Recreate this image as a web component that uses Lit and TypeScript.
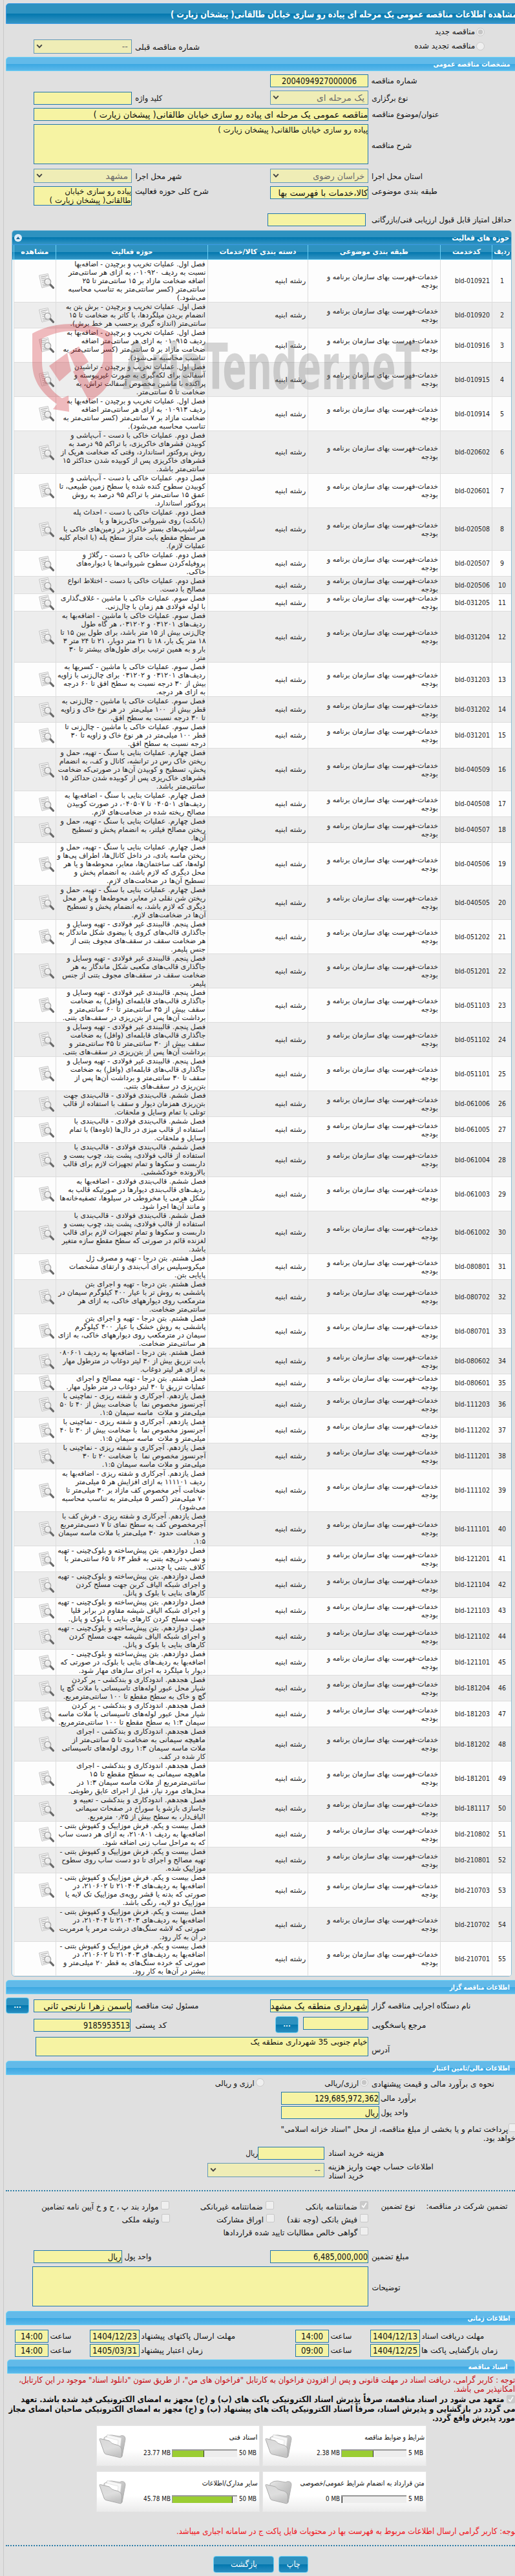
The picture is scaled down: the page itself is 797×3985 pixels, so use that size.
import { LitElement, html, css, svg, nothing } from "lit";
import { customElement, property } from "lit/decorators.js";

type Line = [string, number];
type Row = [string, ...Line[]];

/* One line of text squeezed or stretched horizontally to a set width. */
@customElement("fit-text")
class FitText extends LitElement {
  @property() t = "";
  @property({ type: Number }) w = 0;
  @property({ type: Boolean, reflect: true }) ltr = false;
  static styles = css`
    :host { display: inline-block; white-space: pre; direction: rtl; text-align: right; vertical-align: top; flex: none; }
    :host([ltr]) { direction: ltr; text-align: left; }
    span { display: inline-block; transform-origin: 100% 50%; vertical-align: top; }
    :host([ltr]) span { transform-origin: 0 50%; }
  `;
  render() { return html`<span>${this.t}</span>`; }
  updated() {
    const s = this.renderRoot.querySelector("span") as HTMLElement;
    s.style.transform = "none";
    const n = s.getBoundingClientRect().width;
    this.style.width = this.w + "px";
    if (n > 0) s.style.transform = `scaleX(${this.w / n})`;
  }
}

const T = (t: string, w: number) => html`<fit-text .t=${t} .w=${w}></fit-text>`;
const L = (t: string, w: number) => html`<fit-text ltr .t=${t} .w=${w}></fit-text>`;
const span = (x: number) => (627 - x) / 1.967;

const rows: Row[] = [
  ["bld-010921", ["فصل اول. عملیات تخریب و برچیدن - اضافه‌بها", 229], ["نسبت به ردیف ۰۱۰۹۲۰، به ازای هر سانتی‌متر", 209], ["اضافه ضخامت مازاد بر ۱۵ سانتی‌متر تا ۲۵", 253], ["سانتی‌متر (کسر سانتی‌متر به تناسب محاسبه", 209], ["می‌شود.)", 539]],
  ["bld-010920", ["فصل اول. عملیات تخریب و برچیدن - برش بتن به", 202], ["انضمام بریدن میلگردها، با کاتر به ضخامت تا ۱۵", 212], ["سانتی‌متر (اندازه گیری برحسب هر خط برش).", 214]],
  ["bld-010916", ["فصل اول. عملیات تخریب و برچیدن - اضافه‌بها به", 205], ["ردیف ۰۱۰۹۱۵ به ازای هر سانتی‌متر اضافه", 249], ["ضخامت مازاد بر ۵ سانتی‌متر (کسر سانتی‌متر به", 194], ["تناسب محاسبه می‌شود).", 391]],
  ["bld-010915", ["فصل اول. عملیات تخریب و برچیدن - تراشیدن", 228], ["آسفالت برای لکه‌گیری به صورت غیرپیوسته و", 228], ["پراکنده با ماشین مخصوص آسفالت تراش، به", 232], ["ضخامت تا ۵ سانتی‌متر.", 417]],
  ["bld-010914", ["فصل اول. عملیات تخریب و برچیدن - اضافه‌بها به", 205], ["ردیف ۰۱۰۹۱۳ به ازای هر سانتی‌متر اضافه", 249], ["ضخامت مازاد بر ۷ سانتی‌متر (کسر سانتی‌متر به", 194], ["تناسب محاسبه می‌شود).", 391]],
  ["bld-020602", ["فصل دوم. عملیات خاکی با دست - آب‌پاشی و", 217], ["کوبیدن قشرهای خاکریزی، با تراکم ۹۵ درصد به", 210], ["روش پروکتور استاندارد، وقتی که ضخامت هریک از", 187], ["قشرهای خاکریزی پس از کوبیده شدن حداکثر ۱۵", 193], ["سانتی‌متر باشد.", 478]],
  ["bld-020601", ["فصل دوم. عملیات خاکی با دست - آب‌پاشی و", 217], ["کوبیدن سطوح کنده شده یا سطح زمین طبیعی، تا", 182], ["عمق ۱۵ سانتی‌متر با تراکم ۹۵ درصد به روش", 221], ["پروکتور استاندارد.", 473]],
  ["bld-020508", ["فصل دوم. عملیات خاکی با دست - احداث پله", 224], ["(بانکت) روی شیروانی خاک‌ریزها و یا", 305], ["سراشیب‌های بستر خاکریز در زمین‌های خاکی با", 195], ["هر سطح مقطع بابت متراژ سطح پله (با انجام کلیه", 181], ["عملیات لازم).", 508]],
  ["bld-020507", ["فصل دوم. عملیات خاکی با دست - رگلاژ و", 252], ["پروفیله‌کردن سطوح شیروانی‌ها یا دیواره‌های", 234], ["خاکی.", 568]],
  ["bld-020506", ["فصل دوم. عملیات خاکی با دست - اختلاط انواع", 208], ["مصالح با دست.", 488]],
  ["bld-031205", ["فصل سوم. عملیات خاکی با ماشین - غلاف‌گذاری", 187], ["با لوله فولادی هم زمان با چال‌زنی.", 322]],
  ["bld-031204", ["فصل سوم. عملیات خاکی با ماشین - اضافه‌بها به", 190], ["ردیف‌های ۰۳۱۲۰۱ و ۰۳۱۲۰۲، هر گاه طول", 249], ["چال‌زنی بیش از ۱۵ متر باشد، برای طول بین ۱۵ تا", 185], ["۱۸ متر یک بار، ۱۸ تا ۲۱ متر دوبار، ۲۱ تا ۲۴ متر ۳", 193], ["بار و به همین ترتیب برای طول‌های بیشتر تا ۳۰", 211], ["متر.", 594]],
  ["bld-031203", ["فصل سوم. عملیات خاکی با ماشین - کسربها به", 197], ["ردیف‌های ۰۳۱۲۰۱ و ۰۳۱۲۰۲ برای چال‌زنی با زاویه", 177], ["بیش از ۳۰ درجه نسبت به سطح افق تا ۶۰ درجه", 194], ["به ازای هر درجه.", 477]],
  ["bld-031202", ["فصل سوم. عملیات خاکی با ماشین - چال‌زنی به", 190], ["قطر بیش از  ۱۰۰ میلی‌متر  در هر نوع خاک و زاویه", 186], ["تا ۳۰ درجه نسبت به سطح افق.", 338]],
  ["bld-031201", ["فصل سوم. عملیات خاکی با ماشین - چال‌زنی تا", 198], ["قطر ۱۰۰ میلی‌متر در هر نوع خاک و زاویه تا ۳۰", 216], ["درجه نسبت به سطح افق.", 390]],
  ["bld-040509", ["فصل چهارم. عملیات بنایی با سنگ - تهیه، حمل و", 185], ["ریختن خاک رس در ترانشه، کانال و کف، به انضمام", 181], ["پخش، تسطیح و کوبیدن آن‌ها در صورتی‌که ضخامت", 177], ["قشرهای خاک‌ریزی پس از کوبیده شدن حداکثر ۱۵", 186], ["سانتی‌متر باشد.", 478]],
  ["bld-040508", ["فصل چهارم. عملیات بنایی با سنگ - اضافه‌بها به", 198], ["ردیف‌های ۰۴۰۵۰۱ تا ۰۴۰۵۰۷، در صورت کوبیدن", 206], ["مصالح ریخته شده در ضخامت‌های لازم.", 281]],
  ["bld-040507", ["فصل چهارم. عملیات بنایی با سنگ - تهیه، حمل و", 185], ["ریختن مصالح فیلتر، به انضمام پخش و تسطیح", 220], ["آن‌ها.", 582]],
  ["bld-040506", ["فصل چهارم. عملیات بنایی با سنگ - تهیه، حمل و", 185], ["ریختن ماسه بادی، در داخل کانال‌ها، اطراف پی‌ها و", 176], ["لوله‌ها، کف ساختمان‌ها، معابر، محوطه‌ها و یا هر", 196], ["محل دیگری که لازم باشد، به انضمام پخش و", 228], ["تسطیح آن‌ها در ضخامت‌های لازم.", 327]],
  ["bld-040505", ["فصل چهارم. عملیات بنایی با سنگ - تهیه، حمل و", 185], ["ریختن شن نقلی در معابر، محوطه‌ها و یا هر محل", 192], ["دیگری که لازم باشد، به انضمام پخش و تسطیح", 205], ["آن‌ها در ضخامت‌های لازم.", 401]],
  ["bld-051202", ["فصل پنجم. قالببندی غیر فولادی - تهیه وسایل و", 205], ["جاگذاری قالب‌های کروی یا بیضوی شکل ماندگار به", 179], ["هر ضخامت سقف در سقف‌های مجوف بتنی از", 216], ["جنس پلیمر.", 521]],
  ["bld-051201", ["فصل پنجم. قالببندی غیر فولادی - تهیه وسایل و", 205], ["جاگذاری قالب‌های مکعبی شکل ماندگار به هر", 217], ["ضخامت سقف در سقف‌های مجوف بتنی از جنس", 190], ["پلیمر.", 578]],
  ["bld-051103", ["فصل پنجم. قالببندی غیر فولادی - تهیه وسایل و", 205], ["جاگذاری قالب‌های قابلمه‌ای (وافل) به ضخامت", 215], ["سقف بیش از ۴۵ سانتی‌متر تا ۶۰ سانتی‌متر و", 213], ["برداشت آن‌ها پس از بتن‌ریزی در سقف‌های بتنی.", 191]],
  ["bld-051102", ["فصل پنجم. قالببندی غیر فولادی - تهیه وسایل و", 205], ["جاگذاری قالب‌های قابلمه‌ای (وافل) به ضخامت", 215], ["سقف بیش از ۳۰ سانتی‌متر تا ۴۵ سانتی‌متر و", 213], ["برداشت آن‌ها پس از بتن‌ریزی در سقف‌های بتنی.", 191]],
  ["bld-051101", ["فصل پنجم. قالببندی غیر فولادی - تهیه وسایل و", 205], ["جاگذاری قالب‌های قابلمه‌ای (وافل) به ضخامت", 215], ["سقف تا ۳۰ سانتی‌متر و برداشت آن‌ها پس از", 227], ["بتن‌ریزی در سقف‌های بتنی.", 377]],
  ["bld-061006", ["فصل ششم. قالب‌بندی فولادی - قالب‌بندی جهت", 194], ["بتن‌ریزی همزمان دیوار و سقف با استفاده از قالب", 194], ["تونلی با تمام وسایل و ملحقات.", 350]],
  ["bld-061005", ["فصل ششم. قالب‌بندی فولادی - قالب‌بندی با", 227], ["استفاده از قالب میزی در دال‌ها (تاوه‌ها) با تمام", 212], ["وسایل و ملحقات.", 471]],
  ["bld-061004", ["فصل ششم. قالب‌بندی فولادی - قالب‌بندی با", 227], ["استفاده از قالب فولادی، پشت بند، چوب بست و", 196], ["داربست و سکوها و تمام تجهیزات لازم برای قالب", 194], ["بالارونده خودکششی.", 431]],
  ["bld-061003", ["فصل ششم. قالب‌بندی فولادی - اضافه‌بها به", 233], ["ردیف‌های قالب‌بندی دیوارها در صورتیکه قالب به", 209], ["شکل هرمی یا مخروطی در سیلوها، تصفیه‌خانه‌ها", 184], ["و مانند آن‌ها اجرا شود.", 427]],
  ["bld-061002", ["فصل ششم. قالب‌بندی فولادی - قالب‌بندی با", 227], ["استفاده از قالب فولادی، پشت بند، چوب بست و", 196], ["داربست و سکوها و تمام تجهیزات لازم برای قالب", 194], ["لغزنده قائم در صورتی که سطح مقطع سازه متغیر", 189], ["باشد.", 575]],
  ["bld-080801", ["فصل هشتم. بتن درجا - تهیه و مصرف ژل", 264], ["میکروسیلیس برای آب‌بندی و ارتقای مشخصات", 213], ["پایایی بتن.", 532]],
  ["bld-080702", ["فصل هشتم. بتن درجا - تهیه و اجرای بتن", 260], ["پاششی به روش تر با عیار ۴۰۰ کیلوگرم سیمان در", 180], ["مترمکعب روی دیوارههای خاکی، به ازای هر", 240], ["سانتی‌متر ضخامت.", 455]],
  ["bld-080701", ["فصل هشتم. بتن درجا - تهیه و اجرای بتن", 260], ["پاششی به روش خشک با عیار ۴۰۰ کیلوگرم", 229], ["سیمان در مترمکعب روی دیوارههای خاکی، به ازای", 177], ["هر سانتی‌متر ضخامت.", 424]],
  ["bld-080602", ["فصل هشتم. بتن درجا - اضافه‌بها به ردیف ۰۸۰۶۰۱", 181], ["بابت تزریق بیش از ۳۰ لیتر دوغاب در مترطول مهار", 193], ["به ازای هر لیتر دوغاب.", 429]],
  ["bld-080601", ["فصل هشتم. بتن درجا - تهیه مصالح و اجرای", 233], ["عملیات تزریق تا ۳۰ لیتر دوغاب در متر طول مهار.", 203]],
  ["bld-111203", ["فصل یازدهم. آجرکاری و شفته ریزی - نماچینی با", 194], ["آجرنسوز مخصوص نما  با ضخامت بیش از ۴۰ تا ۵۰", 184], ["میلی‌متر و ملات  ماسه سیمان ۱:۵.", 305]],
  ["bld-111202", ["فصل یازدهم. آجرکاری و شفته ریزی - نماچینی با", 194], ["آجرنسوز مخصوص نما  با ضخامت بیش از ۳۰ تا ۴۰", 184], ["میلی‌متر و ملات  ماسه سیمان ۱:۵.", 305]],
  ["bld-111201", ["فصل یازدهم. آجرکاری و شفته ریزی - نماچینی با", 194], ["آجرنسوز مخصوص نما  با ضخامت ۲۰ تا ۳۰", 252], ["میلی‌متر و ملات ماسه سیمان ۱:۵.", 312]],
  ["bld-111102", ["فصل یازدهم. آجرکاری و شفته ریزی - اضافه‌بها به", 191], ["ردیف ۱۱۱۱۰۱ به ازای افزایش هر ۵ میلی‌متر", 232], ["ضخامت آجر مخصوص کف مازاد بر ۳۰ میلی‌متر تا", 202], ["۷۰ میلی‌متر (کسر ۵ میلی‌متر به تناسب محاسبه", 189], ["می‌شود).", 539]],
  ["bld-111101", ["فصل یازدهم. آجرکاری و شفته ریزی - فرش کف با", 190], ["آجرمخصوص کف به سطح نمای تا ۷ دسی‌مترمربع", 185], ["و ضخامت حدود ۳۰ میلی‌متر با ملات ماسه سیمان", 179], ["۱:۵.", 590]],
  ["bld-121201", ["فصل دوازدهم. بتن پیش‌ساخته و بلوک‌چینی - تهیه", 178], ["و نصب دریچه بتنی به قطر ۶۳ تا ۶۵ سانتی‌متر با", 197], ["کلاف بتنی یا چدنی.", 447]],
  ["bld-121104", ["فصل دوازدهم. بتن پیش‌ساخته و بلوک‌چینی - تهیه", 178], ["و اجرای شبکه الیاف کربن جهت مسلح کردن", 232], ["کارهای بنایی با بلوک و پانل.", 376]],
  ["bld-121103", ["فصل دوازدهم. بتن پیش‌ساخته و بلوک‌چینی - تهیه", 178], ["و اجرای شبکه الیاف شیشه مقاوم در برابر قلیا", 217], ["جهت مسلح کردن کارهای بنایی با بلوک و پانل.", 209]],
  ["bld-121102", ["فصل دوازدهم. بتن پیش‌ساخته و بلوک‌چینی - تهیه", 178], ["و اجرای شبکه الیاف شیشه جهت مسلح کردن", 211], ["کارهای بنایی با بلوک و پانل.", 376]],
  ["bld-121101", ["فصل دوازدهم. بتن پیش‌ساخته و بلوک‌چینی -", 219], ["اضافه‌بها به ردیف‌های بنایی با بلوک، در صورتی که", 185], ["دیوار با میلگرد به اجزای سازهای مهار شود.", 241]],
  ["bld-181204", ["فصل هجدهم. اندودکاری و بندکشی - پر کردن", 220], ["شیار محل عبور لوله‌های تاسیساتی با ملات گچ یا", 185], ["گچ و خاک به سطح مقطع تا ۱۰۰ سانتی‌مترمربع.", 193]],
  ["bld-181203", ["فصل هجدهم. اندودکاری و بندکشی - پر کردن", 220], ["شیار محل عبور لوله‌های تاسیساتی با ملات ماسه", 179], ["سیمان ۱:۳ به سطح مقطع تا ۱۰۰ سانتی‌مترمربع.", 180]],
  ["bld-181202", ["فصل هجدهم. اندودکاری و بندکشی - اجرای", 233], ["ماهیچه سیمانی به ضخامت تا ۵ سانتی‌متر از", 221], ["ملات ماسه سیمان ۱:۳ روی لوله‌های تاسیساتی", 189], ["کار شده در کف.", 485]],
  ["bld-181201", ["فصل هجدهم. اندودکاری و بندکشی - اجرای", 233], ["ماهیچه سیمانی به سطح مقطع تا ۱۵", 273], ["سانتی‌مترمربع از ملات ماسه سیمان ۱:۳ در", 236], ["محل‌های مورد نیاز، قبل از اجرای عایق رطوبتی.", 209]],
  ["bld-181117", ["فصل هجدهم. اندودکاری و بندکشی - تعبیه و", 225], ["جاسازی بازشو یا سوراخ در صفحات سیمانی", 231], ["الیاف‌دار، به سطح بیش از ۰٫۲۵ مترمربع.", 269]],
  ["bld-210802", ["فصل بیست و یکم. فرش موزاییک و کفپوش بتنی -", 183], ["اضافه‌بها به ردیف ۲۱۰۸۰۱، به ازای هر دست ساب", 180], ["که به مراحل ساب زنی اضافه شود.", 314]],
  ["bld-210801", ["فصل بیست و یکم. فرش موزاییک و کفپوش بتنی -", 183], ["تهیه مصالح و اجرای تا دو دست ساب روی سطوح", 189], ["موزاییک شده.", 504]],
  ["bld-210703", ["فصل بیست و یکم. فرش موزاییک و کفپوش بتنی -", 183], ["اضافه‌بها به ردیف‌های ۲۱۰۴۰۳ تا ۲۱۰۶۰۲، در", 224], ["صورتی که بدنه یا قشر رویه‌ی موزاییک تک لایه یا", 199], ["موزاییک دو لایه، رنگی باشد.", 375]],
  ["bld-210702", ["فصل بیست و یکم. فرش موزاییک و کفپوش بتنی -", 183], ["اضافه‌بها به ردیف‌های ۲۱۰۴۰۳ تا ۲۱۰۴۰۴، در", 224], ["صورتی که لاشه سنگ‌های درشت مرمر یا مرمریت", 181], ["در آن به کار رود.", 486]],
  ["bld-210701", ["فصل بیست و یکم. فرش موزاییک و کفپوش بتنی -", 183], ["اضافه‌بها به ردیف‌های ۲۱۰۴۰۳ تا ۲۱۰۶۰۲، در", 224], ["صورتی که خرده سنگ‌های به قطر ۲۰ میلی‌متر و", 194], ["بیشتر در آن‌ها به کار رود.", 405]],
];

const docIcon = html`<svg class="doc" viewBox="0 0 24 24" width="24" height="24">
  <path d="M.6 3.2 14.2.5l4.600 17.900L5 22.200Q2.400 12 .6 3.200z" fill="#f4f4f4" stroke="#bdbdbd" stroke-width=".9"/>
  <path d="M3 5.600 13.600 3.400M3.600 8.400l7.600-1.600M4.200 11.200l6-1.300M4.900 14l5.600-1.200M5.600 17l8-1.800M6.300 19.400l7-1.700" stroke="#b4b4b4" stroke-width="1.1"/>
  <path d="m17.600 17.200 4.800 5" stroke="#6a6a6a" stroke-width="3.2" stroke-linecap="round"/>
  <circle cx="13.8" cy="13" r="4.9" fill="#ececec" fill-opacity=".88" stroke="#a2a2a2" stroke-width="1.2"/>
  <path d="M10.800 12a3.300 3.300 0 0 1 3-2.300" stroke="#fff" stroke-width="1.2" fill="none"/>
</svg>`;

const folderIcon = (full: boolean) => html`<svg class="folder" viewBox="0 0 42 38" width="42" height="38">
  <defs>
    <linearGradient id="fb" x1="0" y1="0" x2="1" y2="1"><stop offset="0" stop-color="#e8e8e8"/><stop offset="1" stop-color="#a8a8a8"/></linearGradient>
    <linearGradient id="ff" x1="0" y1="0" x2=".3" y2="1"><stop offset="0" stop-color="#d8d8d8"/><stop offset=".6" stop-color="#dedede"/><stop offset="1" stop-color="#c4c4c4"/></linearGradient>
  </defs>
  <path d="M8 6Q14 1 20 2l12 2q3-2 6-1 3 1 3 5l-5 27q-1 2-3 1L8 22z" fill="url(#fb)" stroke="#b2b2b2"/>
  ${full ? svg`<path d="m13 1.400 22 5-3 24L8 22z" fill="#f7f7f7" stroke="#cfcfcf" stroke-width=".7"/><path d="m10 5 20 5-2 20L8 22z" fill="#fff" stroke="#dcdcdc" stroke-width=".7"/>` : nothing}
  <path d="M1 8.600q0-1.600 1.600-1L15 10.600q2 .5 3.400 2.400t5 3q8 1.600 10 4 2.400 3 2 7.600l-.6 8q-.3 1.600-2 1.200L11 31.600q-2-.6-2.800-2.600z" fill="url(#ff)" stroke="#ababab"/>
</svg>`;

const chevron = html`<svg viewBox="0 0 10 8" width="10" height="8"><path d="m1.200 1.400 3.800 4 3.800-4" fill="none" stroke="#444" stroke-width="2"/></svg>`;
const radio = (on = false) => html`<i class="radio ${on ? "on" : ""}"></i>`;
const check = (on = false) => html`<i class="check ${on ? "on" : ""}">${on ? html`<svg viewBox="0 0 13 13" width="11" height="11"><path d="m2.500 7 3 3.200 5-8" fill="none" stroke="#fff" stroke-width="2"/></svg>` : nothing}</i>`;
const select = (t: string, w: number) => html`<div class="field sel">${chevron}${T(t, w)}</div>`;
const input = (t = "", w = 0, ltr = false) => html`<div class="field">${t ? (ltr ? L(t, w) : T(t, w)) : nothing}</div>`;
const lbl = (t: string, w: number, c = "") => html`<label class="lbl ${c}">${T(t, w)}</label>`;
const option = (t: string, w: number, c = "", on = false) => html`<div class="op ${c}">${T(t, w)}${check(on)}</div>`;

@customElement("app-root")
class AppRoot extends LitElement {
  static styles = css`
    :host { display: block; width: 797px; height: 3985px; overflow: hidden; background: #e0e0e0; position: relative;
      font: 12px/14px "DejaVu Sans Condensed", "DejaVu Sans", sans-serif; color: #111; }
    * { box-sizing: border-box; }
    .page { margin-left: 5px; border-left: 1px solid #c8c8c8; width: 792px; height: 3985px; padding: 5px 0 0 3px; }
    .title { width: 800px; height: 32px; border: 1px solid #3a9ae6; border-radius: 5px 5px 0 0; direction: rtl; padding-right: 8px;
      background: linear-gradient(#2e92c0 0 50%, #0277ae 50%, #3595c4); color: #fff; font-weight: bold; font-size: 14px; line-height: 33px; }
    .sec { width: 797px; height: 22px; border: 1px solid #6cd0f5; border-radius: 5px 5px 0 0; direction: rtl; padding-right: 16px;
      background: linear-gradient(#62bae9 0 50%, #3aa8e2 50%, #5cb8ea); color: #fff; font-weight: bold; font-size: 11px; line-height: 21px; }
    .sec.s2 { margin-top: 5px; } .sec.s3, .sec.s4 { margin-top: 7px; }
    .sec.inset { margin-left: 2px; width: 786px; padding-right: 10px; }
    .grid { display: grid; grid-template-columns: 43px 152px 214px 152px 1fr; align-items: end; width: 788px; }
    .grid > .r { grid-column: 4 / 6; }
    .wide { grid-column: 2 / 5; }
    .c1 { grid-column: 1; } .c2 { grid-column: 2; } .c3 { grid-column: 3; } .c4 { grid-column: 4; } .c5 { grid-column: 5; }
    .opt { display: flex; direction: rtl; align-items: center; gap: 2px; height: 24px; padding-right: 47px; }
    .field { height: 20px; border: 1px solid #2277ab; background: #f6f3a3; direction: rtl; font-size: 13.5px; line-height: 19px; overflow: hidden; color: #111; width: 100%; }
    .ctr .field { text-align: center; direction: ltr; }
    .sel { height: 22px; border-color: #6399b8; background: #efedb6; color: #6c6c6c; display: flex; direction: ltr; align-items: center; justify-content: space-between; padding: 0 5px 0 3px; }
    .lbl { display: block; text-align: left; padding-left: 5px; height: 20px; line-height: 20px; }
    .area .field { height: 30px; font-size: 12px; line-height: 14px; }
    .area.tall .field { height: 62px; padding-top: 1px; }
    .top { grid-template-rows: 24px 22px; height: 51px; }
    .f1 { grid-template-rows: 25px 27px 25px 67px 29px 35px 32px; }
    .up { margin-bottom: 19px; } .up2 { margin-bottom: 12px; }
    .raise { margin-bottom: 10px; }
    .shift { margin: 0 4px 0 -4px; }
    .radio { width: 13px; height: 13px; border-radius: 50%; border: 1px solid #c9c9c9; background: #efefef; flex: none; }
    .radio.on { background: radial-gradient(#c6c6c6 0 3.5px, #efefef 4.2px); }
    .check { width: 13px; height: 13px; border-radius: 2px; border: 1px solid #c8c8c8; background: #efefef; flex: none; }
    .check svg { display: block; }
    .check.on { background: #cacaca; }

    .panel { margin: 6px 0 0 9px; width: 774px; border: 1px solid #8fbfd8; border-radius: 5px; overflow: hidden; background: #fff; direction: rtl; }
    .phead { height: 22px; background: linear-gradient(#2e92c0 0 50%, #0277ae 50%, #3595c4); border-bottom: 1px solid #3a9ae6; display: flex; justify-content: space-between; align-items: center;
      padding: 0 3px; color: #fff; font-weight: bold; font-size: 12px; }
    .tgl { width: 12px; height: 12px; border-radius: 50%; background: #dcecf8; display: grid; place-items: center; }
    .tgl svg { display: block; }
    .tr { display: grid; grid-template-columns: 30px 80px 205px 155px 235px 65px; border-bottom: 1px solid #ddd; font-size: 11px; line-height: 13px; color: #222; width: 770px; background: #fdfdfd; }
    .tr:nth-child(odd) { background: #ededed; }
    .tr > div { border-left: 1px solid #ddd; padding-right: 3px; display: flex; flex-direction: column; justify-content: center; align-items: flex-start; }
    .tr > .num { align-items: center; padding-right: 0; }
    .tr .ic { padding-right: 2px; }
    .tr.th { width: 772px; height: 23px; background: linear-gradient(#2e92c0 0 50%, #0277ae 50%, #3595c4); border-bottom: 1px solid #6cd0f5; color: #fff; font-weight: bold; grid-template-columns: 30px 80px 205px 155px 235px 65px 1fr; }
    .tr.th > div { border-left-color: #6cd0f5; align-items: center; padding: 0 0 1px; }
    .tr.th > div:last-child { border: 0; }

    .wm { position: absolute; left: 40px; top: 490px; opacity: .3; pointer-events: none; }

    .btn { border: 1px solid #6cd0f5; border-radius: 4px; background: linear-gradient(#2e92c0 0 50%, #0277ae 50%, #2a8ec0); color: #fff; display: grid; place-items: center; font-size: 13px; height: 26px; }
    .f2 { grid-template-rows: 28px 30px 38px; }
    .f2 .btn { width: 36px; height: 25px; margin-bottom: -2px; font-weight: bold; font-size: 11px; }
    .ask { display: flex; align-items: flex-start; }
    .ask .btn { margin: -1px 7px -4px 8px; height: 26px; flex: none; }
    .ask .field { margin-bottom: 0; }
    .ask, .askl { margin-bottom: 2px; }
    .post { margin-right: 2px; }
    .addr { margin-left: 3px; }
    .cur { display: flex; align-items: center; gap: 2px; height: 22px; margin-bottom: 4px; padding-left: 324px; }
    .cur fit-text { margin-top: 3px; }
    .cur .k { margin-left: 91px; display: flex; }
    .cur .lbl { padding-left: 3px; margin-top: -1px; }
    .pay { display: grid; grid-template-columns: 426px 152px 1fr; grid-template-rows: 20px 22px; align-items: end; }
    .pay .lbl { padding-left: 2px; }
    .treas { display: flex; direction: rtl; height: 30px; margin: 7px 0 6px; width: 791px; }
    .treas .tx { display: flex; flex-direction: column; align-items: flex-start; margin: 2px 1px 0 0; }
    .treas .tx fit-text + fit-text { margin-right: -12px; }
    .cost { display: grid; grid-template-columns: 312px 78px 103px 1fr; grid-template-rows: 20px 27px; align-items: end; }
    .cost .lbl { padding-left: 6px; }
    .rial { grid-column: 2; text-align: right; height: 20px; line-height: 20px; }
    .acc { grid-column: 2 / 4; }
    .two { display: flex; flex-direction: column; align-items: flex-start; margin: 0 0 -5px 6px; }
    .dash { border-top: 2px dotted #2f7fa8; width: 788px; }
    .dash.d1 { margin: 20px 0 15px; } .dash.d2 { margin: 14px 0 15px; }
    .guar { display: grid; grid-template-columns: 254px 162px 145px 73px 142px; grid-template-rows: 20px 20px 20px; }
    .op { display: flex; justify-content: flex-end; gap: 4px; }
    .op fit-text { margin-top: 2px; }
    .op.row1 { grid-row: 1; padding-right: 1px; }
    .gl { text-align: right; padding-top: 1px; }
    .all { grid-column: 1 / 4; }
    .f3 { grid-template-rows: 36px 67px; }
    .narrow { margin-right: 15px; }
    .near { margin-left: -17px; }
    .note { margin-left: -2px; }
    .dates { display: grid; grid-template-columns: 14px 52px 64px 77px 241px 52px 64px 77px 1fr; grid-template-rows: 20px 20px; row-gap: 2px; margin: 7px 0 4px; }
    .dates .lbl { padding-left: 2px; }
    .dates .field { text-align: center; }
    .d2c { grid-column: 2; }
    .red { color: #c80d14; direction: rtl; display: flex; flex-direction: column; align-items: flex-start; width: 788px; font-size: 13px; margin: 3px 0 2px; }
    .red.last { color: #f0141c; margin: 23px 0 0; width: 791px; }
    .bold { font-weight: bold; direction: rtl; display: flex; flex-direction: column; align-items: flex-start; width: 788px; font-size: 13px; line-height: 14.5px; }
    .l1 { display: flex; gap: 4px; height: 14.5px; }
    .cards { display: grid; grid-template-columns: 253px 254px; gap: 8px 4px; margin: 3px 0 0 140px; }
    .card { height: 63px; background: linear-gradient(#fff 0 60%, #ebebeb); border: 1px solid #e6e6e6; font-size: 11px; display: grid; grid-template-columns: 46px 1fr; }
    .folder { margin: 12px 0 0 3px; }
    .ct { text-align: right; padding: 11px 2px 0 0; line-height: 14px; height: 25px; }
    .meter { display: flex; justify-content: flex-end; align-items: center; margin-top: 10px; padding-right: 4px; height: 14px; }
    .bar { width: 101px; height: 12px; background: #ededed; border-top: 2px solid #999; border-left: 1px solid #999; margin: 0 3px 0 2px; }
    .fill { height: 100%; background: #9acd32; border-right: 1px solid #333; }
    .actions { display: flex; gap: 7px; margin-left: 321px; }
    .back { width: 94px; } .print { width: 46px; }
  `;

  row(r: Row, i: number) {
    const [code, ...lines] = r;
    return html`<div class="tr">
      <div class="num">${L(String(i + 1), i < 9 ? 6 : 12)}</div>
      <div>${L(code, 54)}</div>
      <div>${T("خدمات-فهرست بهای سازمان برنامه و", 172)}${T("بودجه", 26)}</div>
      <div>${T("رشته ابنیه", 48)}</div>
      <div>${lines.map(([t, x]) => T(t, span(x)))}</div>
      <div class="ic">${docIcon}</div>
    </div>`;
  }

  card(title: string, tw: number, cap: string, cw: number, used: string, uw: number, pct: number) {
    return html`<div class="card">${folderIcon(pct > 0)}
      <div><div class="ct">${T(title, tw)}</div>
      <div class="meter">${L(used, uw)}<div class="bar"><div class="fill" style="width:${pct}%"></div></div>${L(cap, cw)}</div></div></div>`;
  }

  date(label: string, w: number, day: string, time: string, first = false) {
    return html`<div class=${first ? "d2c" : ""}>${input(time, 34, true)}</div>${lbl("ساعت", 33)}<div>${input(day, 69, true)}</div>${lbl(label, w)}`;
  }

  render() {
    return html`<div class="page">
      <div class="title">${T("مشاهده اطلاعات مناقصه عمومی یک مرحله ای پیاده رو سازی خیابان طالقانی( پیشخان زیارت )", 536)}</div>
      <div class="grid top">
        <div class="r opt">${radio(true)}${T("مناقصه جدید", 62)}</div>
        <div class="c2">${select("--", 9)}</div>${lbl("شماره مناقصه قبلی", 100)}
        <div class="r opt">${radio()}${T("مناقصه تجدید شده", 94)}</div>
      </div>
      <div class="sec">${T("مشخصات مناقصه عمومی", 119)}</div>
      <div class="grid f1">
        <div class="c4 ctr">${input("2004094927000006", 116, true)}</div>${lbl("شماره مناقصه", 71)}
        <div class="c2">${input()}</div>${lbl("کلید واژه", 42)}<div class="c4">${select("یک مرحله ای", 74)}</div>${lbl("نوع برگزاری", 56)}
        <div class="wide">${input("مناقصه عمومی یک مرحله ای پیاده رو سازی خیابان طالقانی( پیشخان زیارت )", 425)}</div>${lbl("عنوان/موضوع مناقصه", 104)}
        <div class="wide area tall">${input("پیاده رو سازی خیابان طالقانی( پیشخان زیارت )", 232)}</div>${lbl("شرح مناقصه", 62, "up")}
        <div class="c2">${select("مشهد", 35)}</div>${lbl("شهر محل اجرا", 72)}<div class="c4">${select("خراسان رضوی", 80)}</div>${lbl("استان محل اجرا", 79)}
        <div class="c2 area"><div class="field">${T("پیاده رو سازی خیابان", 103)}${T("طالقانی( پیشخان زیارت )", 126)}</div></div>${lbl("شرح کلی حوزه فعالیت", 114, "up2")}
        <div class="c4 raise">${input("کالا،خدمات با فهرست بها", 139)}</div>${lbl("طبقه بندی موضوعی", 102, "up2")}
        <div class="c4 shift">${input()}</div>${lbl("حداقل امتیاز قابل قبول ارزیابی فنی/بازرگانی", 217)}
      </div>

      <div class="panel">
        <div class="phead">${T("حوزه های فعالیت", 89)}<span class="tgl"><svg viewBox="0 0 6 4" width="6" height="4"><path d="M0 4 3 0l3 4z" fill="#16699c"/></svg></span></div>
        <div class="tbl">
          <div class="tr th"><div>${T("ردیف", 25)}</div><div>${T("کدخدمت", 44)}</div><div>${T("طبقه بندی موضوعی", 106)}</div><div>${T("دسته بندی کالا/خدمات", 119)}</div><div>${T("حوزه فعالیت", 64)}</div><div>${T("مشاهده", 43)}</div><div></div></div>
          ${rows.map((r, i) => this.row(r, i))}
        </div>
      </div>

      <div class="sec s2">${T("اطلاعات مناقصه گزار", 93)}</div>
      <div class="grid f2">
        <div class="c1"><div class="btn">...</div></div><div class="c2">${input("یاسمن زهرا نارنجي ثاني", 136)}</div>${lbl("مسئول ثبت مناقصه", 98)}<div class="c4">${input("شهرداری منطقه یک مشهد", 150)}</div>${lbl("نام دستگاه اجرایی مناقصه گزار", 153)}
        <div class="c2 post">${input("9185953513", 72, true)}</div>${lbl("کد پستی", 49)}
        <div class="c4 ask"><div class="btn">...</div>${input()}</div>${lbl("مرجع پاسخگویی", 84)}
        <div class="wide area addr">${input("خیام جنوبی 35 شهرداری منطقه یک", 181)}</div>${lbl("آدرس", 28)}
      </div>

      <div class="sec s3">${T("اطلاعات مالی/تامین اعتبار", 119)}</div>
      <div class="cur">${T("ارزی و ریالی", 61)}${radio()}<span class="k">${T("ارزی/ریالی", 53)}</span>${radio(true)}${lbl("نحوه ی برآورد مالی و قیمت پیشنهادی", 190)}</div>
      <div class="pay">
        <div class="c2">${input("129,685,972,362", 99, true)}</div>${lbl("برآورد مالی", 55)}
        <div class="c2">${input("ریال", 21)}</div>${lbl("واحد پول", 42)}
      </div>
      <div class="treas">${check()}<div class="tx">${T('پرداخت تمام و یا بخشی از مبلغ مناقصه، از محل "اسناد خزانه اسلامی"', 352)}${T("خواهد بود.", 50)}</div></div>
      <div class="cost">
        <div class="rial">${T("ریال", 19)}</div><div>${input()}</div>${lbl("هزینه خرید اسناد", 86)}
        <div class="acc">${select("--", 9)}</div><div class="two">${T("اطلاعات حساب جهت واریز هزینه", 163)}${T("خرید اسناد", 55)}</div>
      </div>
      <div class="dash d1"></div>
      <div class="guar">
        ${option("موارد بند پ ، ح و خ آیین نامه تضامین", 181, "row1")}${option("ضمانتنامه غیربانکی", 97, "row1")}${option("ضمانتنامه بانکی", 80, "row1b", true)}<div class="gl">${T("نوع تضمین", 53)}</div><div class="gl">${T("تضمین شرکت در مناقصه:", 126)}</div>
        ${option("وثیقه ملکی", 58, "c1")}${option("اوراق مشارکت", 73, "c2")}${option("فیش بانکی (وجه نقد)", 109, "c3")}
        ${option("گواهی خالص مطالبات تایید شده قراردادها", 208, "all")}
      </div>
      <div class="grid f3">
        <div class="c2 narrow">${input("ریال", 21)}</div>${lbl("واحد پول", 42, "near")}<div class="c4">${input("6,485,000,000", 84, true)}</div>${lbl("مبلغ تضمین", 58)}
        <div class="wide area tall note">${input()}</div>${lbl("توضیحات", 44, "up")}
      </div>

      <div class="sec s4">${T("اطلاعات زمانی", 66)}</div>
      <div class="dates">
        ${this.date("مهلت ارسال پاکتهای پیشنهاد", 146, "1404/12/23", "14:00", true)}${this.date("مهلت دریافت اسناد", 97, "1404/12/13", "14:00")}
        ${this.date("زمان اعتبار پیشنهاد", 96, "1405/03/31", "14:00", true)}${this.date("زمان بازگشایی پاکت ها", 118, "1404/12/25", "09:00")}
      </div>

      <div class="sec inset">${T("اسناد مناقصه", 61)}</div>
      <div class="red">${T('توجه : کاربر گرامی، دریافت اسناد در مهلت قانونی و پس از افزودن فراخوان به کارتابل "فراخوان های من"، از طریق ستون "دانلود اسناد" موجود در این کارتابل،', 768)}${T("امکانپذیر می باشد.", 95)}</div>
      <div class="bold">
        <div class="l1">${check(true)}${T("متعهد می شود در اسناد مناقصه، صرفاً پذیرش اسناد الکترونیکی پاکت های (ب) و (ج) مجهز به امضای الکترونیکی قید شده باشد. تعهد", 748)}</div>
        ${T("می گردد در بازگشایی و پذیرش اسناد، صرفاً اسناد الکترونیکی پاکت های پیشنهاد (ب) و (ج) مجهز به امضای الکترونیکی صاحبان امضای مجاز", 784)}
        ${T("مورد پذیرش واقع گردد.", 128)}
      </div>
      <div class="cards">
        ${this.card("اسناد فنی", 44, "50 MB", 27, "23.77 MB", 42, 49)}
        ${this.card("شرایط و ضوابط مناقصه", 93, "5 MB", 23, "2.38 MB", 36, 49)}
        ${this.card("سایر مدارک/اطلاعات", 86, "50 MB", 27, "45.78 MB", 42, 93)}
        ${this.card("متن قرارداد به انضمام شرایط عمومی/خصوصی", 192, "5 MB", 23, "0 MB", 22, 0)}
      </div>
      <div class="red last">${T("توجه: کاربر گرامی ارسال اطلاعات مربوط به فهرست بها در محتویات فایل پاکت ج در سامانه اجباری میباشد.", 527)}</div>
      <div class="dash d2"></div>
      <div class="actions"><div class="btn back">${T("بازگشت", 41)}</div><div class="btn print">${T("چاپ", 21)}</div></div>
    </div>
    <svg class="wm" width="640" height="160" viewBox="40 490 640 160">
      <path fill="#d0222c" d="M50 516C80 498 140 494 174 517V572C172 595 158 610 138 621L113 575 125 566 138 592C152 578 160 565 160 555V524C130 508 95 508 65 524V560C65 588 80 606 96 616L106 612 107 637 82 633 88 625C60 605 50 585 50 560ZM76 566 104 546 110 574 92 590ZM106 545 122 536 137 560 118 572Z"/>
      <text x="190" y="602" textLength="460" lengthAdjust="spacingAndGlyphs" font-family="DejaVu Sans Condensed, sans-serif" font-weight="bold" font-size="98" fill="#777">AriaTender.neT</text>
    </svg>`;
  }
}
